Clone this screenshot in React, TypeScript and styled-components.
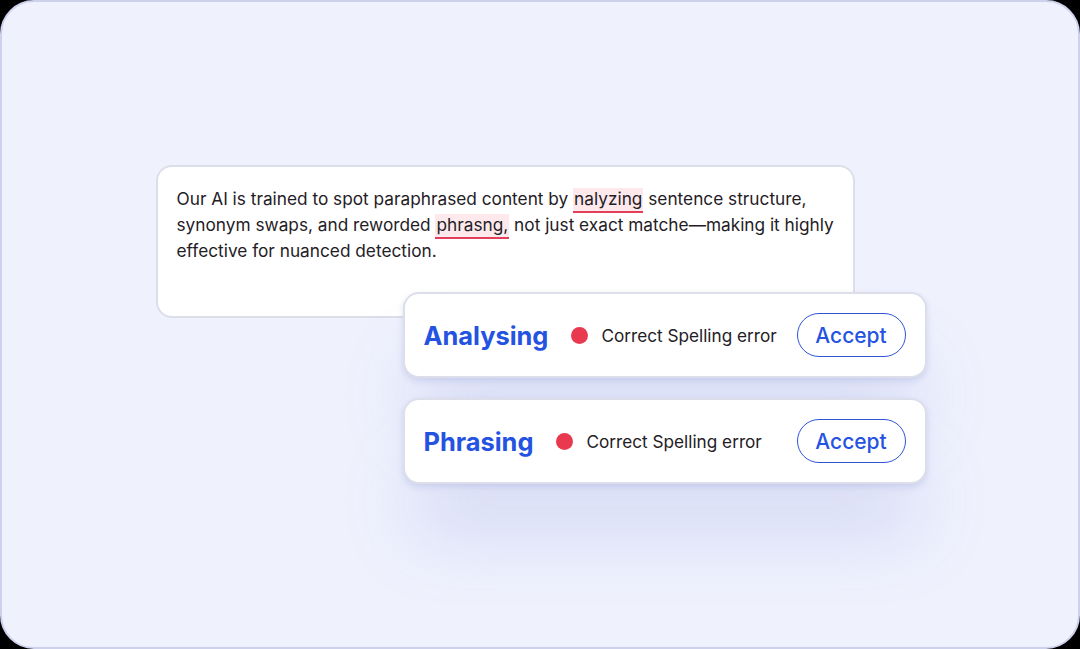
import React from 'react';
import styled, { createGlobalStyle } from 'styled-components';

const GlobalStyle = createGlobalStyle`
  html, body {
    margin: 0;
    padding: 0;
    background: #000;
  }
  * { box-sizing: border-box; }
`;

const Frame = styled.div`
  width: 1080px;
  height: 649px;
  border-radius: 34px;
  border: 2px solid #cdd1ec;
  background: #eff1fd;
  display: flex;
  align-items: center;
  justify-content: center;
  padding-left: 2px;
  font-family: Inter, 'Noto Sans', sans-serif;
`;

const Stage = styled.div`
  width: 771px;
  display: flex;
  flex-direction: column;
`;

const TextCard = styled.div`
  width: 699px;
  height: 153px;
  background: #fff;
  border: 2px solid #dcdfea;
  border-radius: 16px;
  padding: 19px 19px;
  font-size: 17.25px;
  line-height: 26px;
  color: #1f2026;
  white-space: nowrap;
`;

const Mistake = styled.span`
  background: #fde9ec;
  border-bottom: 2px solid #e23f5b;
  padding: 0 1px 2px;
`;

const Suggestions = styled.div`
  margin-top: -26px;
  margin-left: 247px;
  display: flex;
  flex-direction: column;
  gap: 20px;
`;

const SuggestionCard = styled.div`
  width: 524px;
  height: 86px;
  background: #fff;
  border: 2px solid #dcdfe9;
  border-radius: 16px;
  display: flex;
  align-items: center;
  padding: 0 19px;
  box-shadow: 0 3px 6px rgba(120, 135, 200, 0.24),
    0 60px 70px -12px rgba(140, 155, 222, 0.28);
`;

const Word = styled.span`
  font-size: 25.4px;
  font-weight: 700;
  color: #2453e2;
  margin-right: 23px;
`;

const Dot = styled.span`
  width: 17px;
  height: 17px;
  border-radius: 50%;
  background: #e8394f;
  margin-right: 13px;
  flex-shrink: 0;
`;

const Hint = styled.span`
  font-size: 17.2px;
  color: #1f2026;
`;

const AcceptButton = styled.button`
  margin-left: auto;
  width: 109px;
  height: 44px;
  border-radius: 22px;
  border: 1.5px solid #2f55d6;
  background: #fff;
  color: #2453e2;
  font-family: Inter, 'Noto Sans', sans-serif;
  font-size: 21px;
  font-weight: 500;
  padding: 0;
  cursor: pointer;
`;

const suggestions = [
  { word: 'Analysing', hint: 'Correct Spelling error' },
  { word: 'Phrasing', hint: 'Correct Spelling error' },
];

export default function App() {
  return (
    <>
      <GlobalStyle />
      <Frame>
        <Stage>
          <TextCard>
            Our AI is trained to spot paraphrased content by <Mistake>nalyzing</Mistake> sentence structure,
            <br />
            synonym swaps, and reworded <Mistake>phrasng,</Mistake> not just exact matche—making it highly
            <br />
            effective for nuanced detection.
          </TextCard>
          <Suggestions>
            {suggestions.map((s) => (
              <SuggestionCard key={s.word}>
                <Word>{s.word}</Word>
                <Dot />
                <Hint>{s.hint}</Hint>
                <AcceptButton>Accept</AcceptButton>
              </SuggestionCard>
            ))}
          </Suggestions>
        </Stage>
      </Frame>
    </>
  );
}
